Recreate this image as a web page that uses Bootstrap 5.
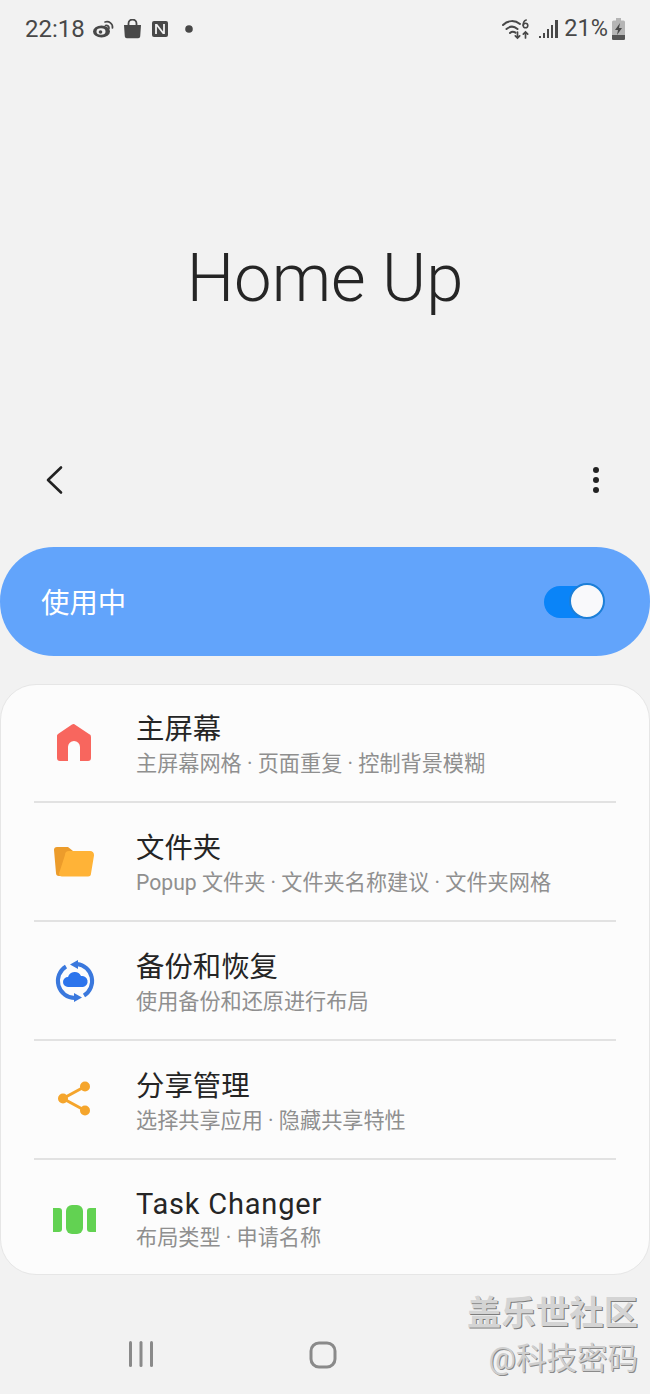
<!DOCTYPE html>
<html lang="zh">
<head>
    <meta charset="UTF-8">
    <meta name="viewport" content="width=device-width, initial-scale=1.0">
    <title>Home Up</title>
    <link href="https://cdn.jsdelivr.net/npm/bootstrap@5.3.0/dist/css/bootstrap.min.css" rel="stylesheet">
    <style>
        html, body { height: 100%; }
        body { background: #f2f2f2; font-family: Roboto, "Noto Sans CJK SC", sans-serif; color: #202020; }
        .screen { position: relative; width: 650px; height: 1394px; overflow: hidden; }
        .status-bar { height: 56px; padding: 2px 25px 0 25px; color: #484848; font-size: 24px; line-height: 1; }
        .hero { height: 396px; padding-top: 48px; }
        .hero-title { font-size: 67px; font-weight: 300; line-height: 1; margin: 0; color: #252525; }
        .toolbar { height: 56px; padding: 0 50px 0 44px; margin-bottom: 39px; }
        .master { height: 109px; border-radius: 54px; background: #62a4fb; color: #fff; padding: 5px 46px 0 41px; font-size: 28.4px; margin-bottom: 28px; }
        .switch-track { position: relative; width: 60px; height: 32px; border-radius: 16px; background: #0a84f8; margin-top: -5px; }
        .switch-knob { position: absolute; right: -1px; top: -3px; width: 36px; height: 36px; border-radius: 50%; background: #f9f9fb; border: 2px solid #1c7fd8; }
        .menu-card { height: 591px; border-radius: 36px; background: #fcfcfc; border: 1px solid #e6e6e6; }
        .menu-row { height: 119px; padding: 0 33px; }
        .menu-row:first-child { height: 118px; }
        .menu-inner { height: 100%; border-bottom: 2px solid #e2e2e2; }
        .menu-row:last-child .menu-inner { border-bottom: 0; padding-bottom: 2px; }
        .menu-icon { width: 102px; flex: none; padding-left: 18px; }
        .menu-icon svg { display: block; }
        .menu-text { padding-top: 5px; }
        .menu-title { font-size: 28.4px; line-height: 34px; color: #252525; }
        .menu-title-latin { font-size: 29px; letter-spacing: .8px; margin-top: -3px; }
        .menu-sub { font-size: 21.15px; line-height: 28px; margin-top: 3px; color: #8f8f8f; }
        .nav-bar { height: 119px; padding: 66px 0 0 128px; gap: 155px; }
        .stamp { position: absolute; right: 12px; line-height: 1; }
        .stamp-top { bottom: 64px; font-size: 34.2px; font-weight: 700; color: #d4d4d4; text-shadow: 1px 1px 0 #7d7d7d; }
        .stamp-bottom { bottom: 20px; font-size: 30.5px; color: #cfcfcf; text-shadow: 1px 1px 0 #8a8a8a; }
    </style>
</head>
<body>
<div class="screen">
    <!-- status bar -->
    <div class="status-bar d-flex align-items-center justify-content-between">
        <div class="d-flex align-items-center">
            <span>22:18</span>
            <svg class="ms-2" width="21" height="18" viewBox="0 0 21 18" fill="none">
                <ellipse cx="8.5" cy="11.5" rx="8.500" ry="6" fill="#484848"/>
                <ellipse cx="8" cy="11.5" rx="4.500" ry="3.300" fill="#f2f2f2"/>
                <circle cx="7.5" cy="12" r="1.8" fill="#484848"/>
                <path d="M12 2c4-1.200 8 1.500 7.500 6M12.500 5.500c2-.5 3.800.8 3.500 3" stroke="#484848" stroke-width="1.700" stroke-linecap="round"/>
            </svg>
            <svg width="19" height="20" viewBox="0 0 19 20" fill="#484848" style="margin-left:9px">
                <path d="M1 6h17l-.8 11.500a2 2 0 0 1-2 1.800H3.800a2 2 0 0 1-2-1.800z"/>
                <path d="M5.500 8V4.500a4 4 0 0 1 8 0V8" fill="none" stroke="#484848" stroke-width="1.800"/>
            </svg>
            <svg width="16" height="16" viewBox="0 0 16 16" style="margin-left:10px">
                <rect width="16" height="16" rx="2" fill="#484848"/>
                <path d="M4 3v10M12 3v10M4.500 3.500l7 9" stroke="#f2f2f2" stroke-width="1.800" fill="none"/>
            </svg>
            <svg width="8" height="8" viewBox="0 0 8 8" style="margin-left:17px"><circle cx="4" cy="4" r="3.800" fill="#484848"/></svg>
        </div>
        <div class="d-flex align-items-center">
            <svg width="27" height="22" viewBox="0 0 27 22" fill="none" stroke="#484848" stroke-width="2" stroke-linecap="round">
                <path d="M1 7c5-5 12-5 17-1M4.500 11c3.500-3 7.500-3 11 0M8 15c1.700-1.500 3.700-1.500 5.500-.3"/>
                <path d="M15.500 14v6m-2.200-2.200 2.200 2.200 2.200-2.200M23.500 20v-6m-2.200 2.200 2.200-2.200 2.200 2.200" stroke-width="1.700"/>
                <circle cx="23.500" cy="7.500" r="2.300" stroke-width="1.600"/>
                <path d="M21.200 7.500c0-3 1-5 3-5.500" stroke-width="1.600"/>
            </svg>
            <svg width="19" height="20" viewBox="0 0 19 20" fill="#484848" style="margin-left:10px">
                <rect x="0" y="17" width="2" height="2"/><rect x="4" y="14" width="2" height="5"/><rect x="8" y="10" width="2" height="9"/><rect x="12" y="6" width="2" height="13"/><rect x="16" y="1" width="3" height="18"/>
            </svg>
            <span style="margin-left:6px;font-size:23.500px">21%</span>
            <svg width="13" height="22" viewBox="0 0 13 22" class="ms-1">
                <path d="M4 0h5v2.500h2.500a1.500 1.500 0 0 1 1.500 1.500v16.500a1.500 1.500 0 0 1-1.500 1.500h-10a1.500 1.500 0 0 1-1.500-1.500V4a1.500 1.500 0 0 1 1.500-1.500H4z" fill="#b5b5b5"/>
                <path d="M0 17h13v3.500a1.500 1.500 0 0 1-1.500 1.500h-10A1.500 1.500 0 0 1 0 20.500z" fill="#555"/>
                <path d="M8 5 3 12h3l-1 5 5-7H7z" fill="#484848"/>
            </svg>
        </div>
    </div>

    <!-- title -->
    <div class="hero d-flex align-items-center justify-content-center">
        <h1 class="hero-title">Home Up</h1>
    </div>

    <!-- toolbar -->
    <div class="toolbar d-flex align-items-center justify-content-between">
        <svg width="20" height="30" viewBox="0 0 20 30" fill="none"><path d="M17 2.500 4 15l13 12.500" stroke="#222" stroke-width="2.600" stroke-linecap="round" stroke-linejoin="round"/></svg>
        <svg width="8" height="28" viewBox="0 0 8 28" fill="#222"><circle cx="4" cy="4" r="3"/><circle cx="4" cy="14" r="3"/><circle cx="4" cy="24" r="3"/></svg>
    </div>

    <!-- master switch -->
    <div class="master d-flex align-items-center justify-content-between">
        <span>使用中</span>
        <div class="switch-track"><div class="switch-knob"></div></div>
    </div>

    <!-- settings list -->
    <div class="menu-card">
        <div class="menu-row">
            <div class="menu-inner d-flex align-items-center">
                <div class="menu-icon">
                    <svg width="44" height="44" viewBox="0 0 44 44">
                        <path d="M22 3 37 13a3 3 0 0 1 2 3v21a3 3 0 0 1-3 3h-8V26a6 6 0 0 0-12 0v14H8a3 3 0 0 1-3-3V16a3 3 0 0 1 1-3L20 3.500a3 3 0 0 1 2-.5z" fill="#f8665e"/>
                    </svg>
                </div>
                <div class="menu-text">
                    <div class="menu-title">主屏幕</div>
                    <div class="menu-sub">主屏幕网格 · 页面重复 · 控制背景模糊</div>
                </div>
            </div>
        </div>
        <div class="menu-row">
            <div class="menu-inner d-flex align-items-center">
                <div class="menu-icon">
                    <svg width="44" height="44" viewBox="0 0 44 44">
                        <path d="M2 10a3 3 0 0 1 3-3h11l5 4h14a3 3 0 0 1 3 3v3H14L9 36H7a3 3 0 0 1-3-3z" fill="#ec9c2b"/>
                        <path d="M13 15a4 4 0 0 1 4-4h21a4 4 0 0 1 4 4.500l-3 18a3 3 0 0 1-3 3H10a3 3 0 0 1-3-3z" fill="#ffb337"/>
                    </svg>
                </div>
                <div class="menu-text">
                    <div class="menu-title">文件夹</div>
                    <div class="menu-sub">Popup 文件夹 · 文件夹名称建议 · 文件夹网格</div>
                </div>
            </div>
        </div>
        <div class="menu-row">
            <div class="menu-inner d-flex align-items-center">
                <div class="menu-icon">
                    <svg width="44" height="44" viewBox="0 0 44 44" fill="none">
                        <path d="M23 39A17 17 0 0 1 14 7.500M25 5.100A17 17 0 0 1 32 36.500" stroke="#3a78dd" stroke-width="4"/>
                        <path d="M26 1v9l-8-4.500zM22 34v9l8-4.500z" fill="#3a78dd"/>
                        <path d="M16 28a5 5 0 0 1 0-10 7 7 0 0 1 13-1 5.500 5.500 0 0 1 2 11z" fill="#2c74ec"/>
                    </svg>
                </div>
                <div class="menu-text">
                    <div class="menu-title">备份和恢复</div>
                    <div class="menu-sub">使用备份和还原进行布局</div>
                </div>
            </div>
        </div>
        <div class="menu-row">
            <div class="menu-inner d-flex align-items-center">
                <div class="menu-icon">
                    <svg width="44" height="44" viewBox="0 0 44 44" fill="#f5a52c">
                        <path d="M33 8.500 11 20.500l22 12" fill="none" stroke="#f5a52c" stroke-width="3"/>
                        <circle cx="33" cy="8.500" r="5"/><circle cx="11" cy="20.500" r="5"/><circle cx="33" cy="32.500" r="5"/>
                    </svg>
                </div>
                <div class="menu-text">
                    <div class="menu-title">分享管理</div>
                    <div class="menu-sub">选择共享应用 · 隐藏共享特性</div>
                </div>
            </div>
        </div>
        <div class="menu-row">
            <div class="menu-inner d-flex align-items-center">
                <div class="menu-icon">
                    <svg width="44" height="44" viewBox="0 0 44 44" fill="#62d252">
                        <path d="M1 11h6a3 3 0 0 1 3 3v18a3 3 0 0 1-3 3H1z"/>
                        <rect x="14" y="8" width="17" height="29" rx="6"/>
                        <path d="M44 11h-6a3 3 0 0 0-3 3v18a3 3 0 0 0 3 3h6z"/>
                    </svg>
                </div>
                <div class="menu-text">
                    <div class="menu-title menu-title-latin">Task Changer</div>
                    <div class="menu-sub">布局类型 · 申请名称</div>
                </div>
            </div>
        </div>
    </div>

    <!-- android nav -->
    <div class="nav-bar d-flex align-items-start">
        <svg width="26" height="26" viewBox="0 0 26 26" fill="#8a8a8a"><rect x="1" y="0" width="3" height="26" rx="1.500"/><rect x="11.500" y="0" width="3" height="26" rx="1.500"/><rect x="22" y="0" width="3" height="26" rx="1.500"/></svg>
        <svg width="28" height="28" viewBox="0 0 28 28" fill="none"><rect x="2" y="2" width="24" height="24" rx="8" stroke="#8a8a8a" stroke-width="3"/></svg>
    </div>

    <!-- watermark -->
    <div class="stamp stamp-top">盖乐世社区</div>
    <div class="stamp stamp-bottom">@科技密码</div>
</div>
<script src="https://cdn.jsdelivr.net/npm/bootstrap@5.3.0/dist/js/bootstrap.bundle.min.js"></script>
</body>
</html>
